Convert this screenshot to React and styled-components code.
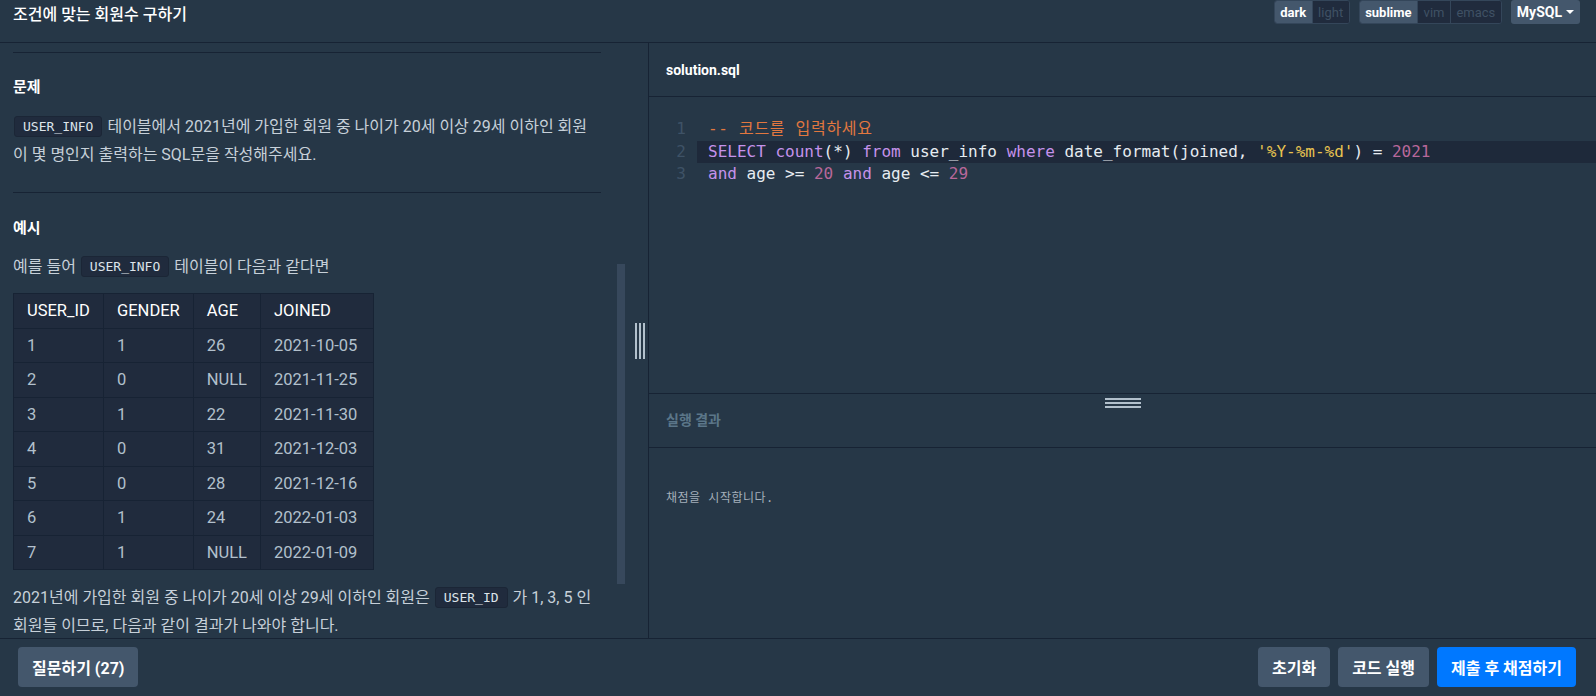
import React from "react";
import styled, { createGlobalStyle } from "styled-components";

const GlobalStyle = createGlobalStyle`
  html, body {
    margin: 0;
    padding: 0;
    background: #263747;
  }
  body {
    font-family: Roboto, "Noto Sans CJK KR", sans-serif;
  }
  * {
    box-sizing: border-box;
  }
`;

const rows = [
  ["1", "1", "26", "2021-10-05"],
  ["2", "0", "NULL", "2021-11-25"],
  ["3", "1", "22", "2021-11-30"],
  ["4", "0", "31", "2021-12-03"],
  ["5", "0", "28", "2021-12-16"],
  ["6", "1", "24", "2022-01-03"],
  ["7", "1", "NULL", "2022-01-09"],
];

const code = [
  [["c", "-- 코드를 입력하세요"]],
  [
    ["k", "SELECT"], ["t", " "], ["k", "count"], ["t", "(*) "], ["k", "from"],
    ["t", " user_info "], ["k", "where"], ["t", " date_format(joined, "],
    ["s", "'%Y-%m-%d'"], ["t", ") = "], ["n", "2021"],
  ],
  [
    ["k", "and"], ["t", " age >= "], ["n", "20"], ["t", " "], ["k", "and"],
    ["t", " age <= "], ["n", "29"],
  ],
];

const tokenColors = {
  c: "#e2773f",
  k: "#c592eb",
  t: "#e6ecf1",
  s: "#e8c350",
  n: "#b8689a",
};

function App() {
  return (
    <Page>
      <GlobalStyle />
      <Header>
        <Title>조건에 맞는 회원수 구하기</Title>
        <Controls>
          <SegGroup>
            <Seg $active>dark</Seg>
            <Seg>light</Seg>
          </SegGroup>
          <SegGroup>
            <Seg $active>sublime</Seg>
            <Seg>vim</Seg>
            <Seg>emacs</Seg>
          </SegGroup>
          <LangSelect>
            MySQL <Caret />
          </LangSelect>
        </Controls>
      </Header>

      <Main>
        <LeftPane>
          <Description>
            <Rule />
            <Heading>문제</Heading>
            <Paragraph $top={15}>
              <Chip>USER_INFO</Chip> 테이블에서 2021년에 가입한 회원 중 나이가 20세 이상 29세 이하인
              회원이 몇 명인지 출력하는 SQL문을 작성해주세요.
            </Paragraph>
            <Rule $top={23} />
            <Heading $top={24}>예시</Heading>
            <Paragraph $top={14}>
              예를 들어 <Chip>USER_INFO</Chip> 테이블이 다음과 같다면
            </Paragraph>
            <DataTable>
              <thead>
                <tr>
                  <th>USER_ID</th>
                  <th>GENDER</th>
                  <th>AGE</th>
                  <th>JOINED</th>
                </tr>
              </thead>
              <tbody>
                {rows.map((r) => (
                  <tr key={r[0]}>
                    {r.map((c, i) => (
                      <td key={i}>{c}</td>
                    ))}
                  </tr>
                ))}
              </tbody>
            </DataTable>
            <Paragraph $top={14}>
              2021년에 가입한 회원 중 나이가 20세 이상 29세 이하인 회원은 <Chip>USER_ID</Chip> 가 1, 3, 5 인
              회원들 이므로, 다음과 같이 결과가 나와야 합니다.
            </Paragraph>
          </Description>
          <ScrollTrack>
            <ScrollThumb />
          </ScrollTrack>
          <SplitGutter>
            <VHandle />
          </SplitGutter>
        </LeftPane>

        <RightPane>
          <FileBar>solution.sql</FileBar>
          <Editor>
            {code.map((line, i) => (
              <CodeLine key={i}>
                <LineNo>{i + 1}</LineNo>
                <CodeText $active={i === 1}>
                  {line.map(([kind, text], j) => (
                    <Tok key={j} $kind={kind}>
                      {text}
                    </Tok>
                  ))}
                </CodeText>
              </CodeLine>
            ))}
          </Editor>
          <Result>
            <HHandle />
            <ResultHead>실행 결과</ResultHead>
            <ResultBody>채점을 시작합니다.</ResultBody>
          </Result>
        </RightPane>
      </Main>

      <Footer>
        <Button>질문하기 (27)</Button>
        <ButtonRow>
          <Button>초기화</Button>
          <Button>코드 실행</Button>
          <Button $primary>제출 후 채점하기</Button>
        </ButtonRow>
      </Footer>
    </Page>
  );
}

const Page = styled.div`
  width: 100%;
  height: 100vh;
  display: flex;
  flex-direction: column;
  background: #263747;
  overflow: hidden;
`;

const Header = styled.header`
  height: 43px;
  flex: none;
  display: flex;
  justify-content: space-between;
  align-items: flex-start;
  padding: 0 16px 0 13px;
  border-bottom: 1px solid #172334;
`;

const Title = styled.h1`
  margin: 4px 0 0;
  font-size: 16px;
  line-height: 22px;
  font-weight: 500;
  color: #ffffff;
`;

const Controls = styled.div`
  display: flex;
  align-items: flex-start;
  gap: 9px;
`;

const SegGroup = styled.div`
  display: flex;
  height: 24px;
  border: 1px solid #34465a;
  border-radius: 3px;
  overflow: hidden;
  background: #202b3d;
`;

const Seg = styled.span`
  display: flex;
  align-items: center;
  padding: 0 5.5px;
  font-size: 13px;
  font-weight: ${(p) => (p.$active ? 700 : 400)};
  color: ${(p) => (p.$active ? "#ffffff" : "#3f5164")};
  background: ${(p) => (p.$active ? "#44576c" : "#202b3d")};
  & + & {
    border-left: 1px solid #34465a;
  }
`;

const LangSelect = styled.span`
  display: flex;
  align-items: center;
  gap: 4px;
  height: 24px;
  padding: 0 6px;
  border-radius: 3px;
  background: #44576c;
  color: #ffffff;
  font-size: 14px;
  font-weight: 700;
`;

const Caret = styled.i`
  width: 0;
  height: 0;
  border-left: 4px solid transparent;
  border-right: 4px solid transparent;
  border-top: 4px solid #ffffff;
`;

const Main = styled.div`
  flex: 1;
  min-height: 0;
  display: flex;
`;

const LeftPane = styled.section`
  width: 649px;
  flex: none;
  display: flex;
  border-right: 1px solid #172334;
`;

const Description = styled.div`
  width: 617px;
  flex: none;
  padding: 9px 16px 0 13px;
  overflow: hidden;
  color: #c6d0d9;
`;

const Rule = styled.div`
  height: 1px;
  margin-top: ${(p) => p.$top || 0}px;
  background: #172334;
`;

const Heading = styled.h4`
  margin: ${(p) => p.$top || 23}px 0 0;
  font-size: 15px;
  line-height: 22px;
  font-weight: 700;
  color: #ffffff;
`;

const Paragraph = styled.p`
  margin: ${(p) => p.$top}px 0 0;
  font-size: 16px;
  line-height: 28px;
`;

const Chip = styled.code`
  display: inline-block;
  margin: 0 1px;
  padding: 0 8px;
  height: 21px;
  line-height: 19px;
  vertical-align: 1px;
  border: 1px solid #1b2636;
  border-radius: 3px;
  background: #202b3d;
  color: #dde4ea;
  font-family: "DejaVu Sans Mono", monospace;
  font-size: 13px;
`;

const DataTable = styled.table`
  margin-top: 12px;
  border-collapse: collapse;
  background: #202b3d;
  border: 1px solid #172334;
  font-size: 16.5px;

  & th,
  & td {
    height: 34.5px;
    padding: 0 13px;
    text-align: left;
    font-weight: 400;
    border: 1px solid #172334;
    color: #b2c0cc;
  }
  & th {
    color: #ffffff;
  }
  & th:nth-child(1) {
    width: 90px;
  }
  & th:nth-child(2) {
    width: 89px;
  }
  & th:nth-child(3) {
    width: 66px;
  }
  & th:nth-child(4) {
    width: 113px;
  }
`;

const ScrollTrack = styled.div`
  width: 8px;
  flex: none;
`;

const ScrollThumb = styled.div`
  margin-top: 221px;
  height: 320px;
  background: #37485c;
`;

const SplitGutter = styled.div`
  flex: 1;
  display: flex;
  align-items: center;
  padding-left: 10px;
`;

const VHandle = styled.span`
  width: 10px;
  height: 36px;
  background: repeating-linear-gradient(
    90deg,
    #b2c0cc 0 2px,
    transparent 2px 4px
  );
`;

const RightPane = styled.section`
  flex: 1;
  min-width: 0;
  display: flex;
  flex-direction: column;
`;

const FileBar = styled.div`
  height: 54px;
  flex: none;
  display: flex;
  align-items: center;
  padding-left: 17px;
  border-bottom: 1px solid #172334;
  color: #ffffff;
  font-size: 14px;
  font-weight: 700;
`;

const Editor = styled.div`
  height: 297px;
  flex: none;
  padding-top: 21px;
  border-bottom: 1px solid #172334;
  font-family: "DejaVu Sans Mono", "Noto Sans CJK KR", monospace;
  font-size: 16px;
  line-height: 22.6px;
`;

const CodeLine = styled.div`
  display: flex;
  height: 22.6px;
`;

const LineNo = styled.span`
  width: 48px;
  flex: none;
  padding-right: 11px;
  text-align: right;
  color: #3e5266;
`;

const CodeText = styled.span`
  flex: 1;
  padding-left: 11px;
  white-space: pre;
  background: ${(p) => (p.$active ? "#1e293a" : "transparent")};
`;

const Tok = styled.span`
  color: ${(p) => tokenColors[p.$kind]};
  letter-spacing: ${(p) => (p.$kind === "c" ? "0.7px" : "0")};
`;

const Result = styled.div`
  flex: 1;
  position: relative;
  display: flex;
  flex-direction: column;
`;

const HHandle = styled.span`
  position: absolute;
  top: 4px;
  left: 50%;
  width: 36px;
  height: 10px;
  transform: translateX(-50%);
  background: repeating-linear-gradient(
    180deg,
    #b2c0cc 0 2px,
    transparent 2px 4px
  );
`;

const ResultHead = styled.div`
  height: 54px;
  flex: none;
  display: flex;
  align-items: center;
  padding: 0 0 4px 17px;
  border-bottom: 1px solid #172334;
  color: #5b7689;
  font-size: 14px;
  font-weight: 700;
`;

const ResultBody = styled.div`
  padding: 40px 17px 0;
  color: #a4afba;
  font-family: "DejaVu Sans Mono", "Noto Sans CJK KR", monospace;
  font-size: 12px;
  letter-spacing: 0.5px;
`;

const Footer = styled.footer`
  height: 58px;
  flex: none;
  display: flex;
  justify-content: space-between;
  align-items: flex-start;
  padding: 8px 20px 0 18px;
  border-top: 1px solid #172334;
`;

const ButtonRow = styled.div`
  display: flex;
  gap: 8px;
`;

const Button = styled.button`
  height: 40px;
  padding: 0 14px;
  border: none;
  border-radius: 4px;
  background: ${(p) => (p.$primary ? "#0078ff" : "#44576c")};
  color: #ffffff;
  font-family: Roboto, "Noto Sans CJK KR", sans-serif;
  font-size: 16px;
  font-weight: 700;
  cursor: pointer;
`;

export default App;
